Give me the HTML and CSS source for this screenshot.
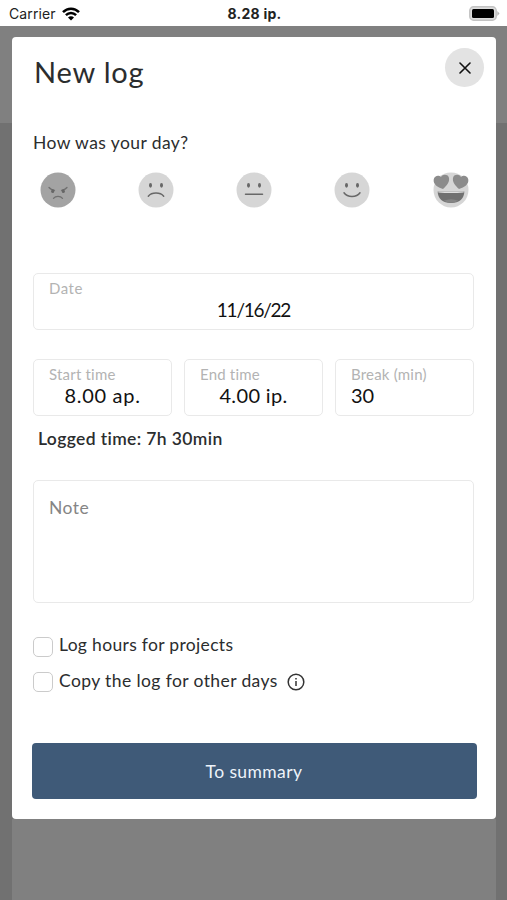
FILE: index.html
```html
<!DOCTYPE html>
<html lang="en">
<head>
<meta charset="utf-8">
<title>New log</title>
<link rel="stylesheet" href="styles.css">
</head>
<body>
<header class="status">
  <div class="carrier"><span class="carrier-name">Carrier</span>
    <svg width="18" height="14" viewBox="0 0 18 14" fill="none" stroke="#000" stroke-width="2.5"><path d="M1 5.1C5.5.5 12.500.5 17 5.100M3.900 8.100c2.900-2.900 7.300-2.900 10.200 0"/><path d="M9 13.500l-3-3.100c1.600-1.600 4.400-1.600 6 0z" fill="#000" stroke="none"/></svg>
  </div>
  <div class="clock"><span class="clock-text">8.28 ip.</span></div>
  <div class="battery"><svg width="31" height="15" viewBox="0 0 31 15"><rect x=".8" y=".8" width="26.400" height="13.400" rx="3.800" fill="#ddd" stroke="#c3c3c3" stroke-width="1.500"/><rect x="3" y="3" width="22" height="9" rx="1.500"/><path d="M28.300 5l2.200 2.500-2.200 2.500z" fill="#b5b5b5"/></svg></div>
</header>
<main class="backdrop">
  <section class="modal">
    <div class="heading">
      <h1><span class="title-text">New log</span></h1>
      <button class="close" aria-label="Close"><svg width="12" height="12" viewBox="0 0 12 12" stroke="#111" stroke-width="1.600" stroke-linecap="round"><path d="M1 1l10 10M11 1L1 11"/></svg></button>
    </div>
    <p class="question"><span class="question-text">How was your day?</span></p>
    <div class="moods">
      <svg viewBox="0 0 36 36"><circle cx="18" cy="18" r="17.500" fill="#a3a3a3"/><g fill="none" stroke="#707070" stroke-width="1.300" stroke-linecap="round"><path d="M9 15.500q2 2.500 5.500 2.800M27 15.500q-2 2.500-5.500 2.800M13.500 26.300c2-2.500 7-2.500 9 0"/></g><g fill="#666"><ellipse cx="12.700" cy="19.200" rx="1.500" ry="1.900"/><ellipse cx="23.300" cy="19.200" rx="1.500" ry="1.900"/></g></svg>
      <svg viewBox="0 0 36 36"><circle cx="18" cy="18" r="17.500" fill="#d6d6d6"/><g fill="#686868"><ellipse cx="12.500" cy="13.300" rx="1.500" ry="2.400"/><ellipse cx="23.500" cy="13.300" rx="1.500" ry="2.400"/></g><path d="M10.300 24.200c3.500-4.200 11.900-4.200 15.400 0" fill="none" stroke="#686868" stroke-width="1.500" stroke-linecap="round"/></svg>
      <svg viewBox="0 0 36 36"><circle cx="18" cy="18" r="17.500" fill="#d6d6d6"/><g fill="#686868"><ellipse cx="12.500" cy="13.300" rx="1.500" ry="2.400"/><ellipse cx="23.500" cy="13.300" rx="1.500" ry="2.400"/></g><path d="M9.500 22.300h17" stroke="#686868" stroke-width="1.500" stroke-linecap="round"/></svg>
      <svg viewBox="0 0 36 36"><circle cx="18" cy="18" r="17.500" fill="#d6d6d6"/><g fill="#686868"><ellipse cx="12.500" cy="13.300" rx="1.500" ry="2.400"/><ellipse cx="23.500" cy="13.300" rx="1.500" ry="2.400"/></g><path d="M10 20.800c3.500 5 12.500 5 16 0" fill="none" stroke="#686868" stroke-width="1.500" stroke-linecap="round"/></svg>
      <svg viewBox="0 0 36 36"><circle cx="18" cy="18" r="17.500" fill="#d6d6d6"/><path d="M4.700 19.500h26.600c0 7-5 11.500-13.300 11.500S4.700 26.500 4.700 19.500z" fill="#707070"/><path d="M5.300 19.500h25.400v1q-12.700 1-25.400 0z" fill="#dedede"/><path d="M10.500 28.800q7.500-3 15 0Q18 32.500 10.500 28.800z" fill="#858585"/><g fill="#8c8c8c"><path d="M10 17C4.500 15.500 0 12 .7 7.500 1.500 3.300 6 2.800 8 5 9.500 2.200 14.500 2 15.800 5.300 17.200 9.500 13.800 13.800 10 17z"/><path d="M26 17C31.500 15.500 36 12 35.300 7.500 34.500 3.300 30 2.800 28 5 26.500 2.200 21.500 2 20.200 5.300 18.800 9.500 22.200 13.800 26 17z"/></g></svg>
    </div>
    <div class="field date"><span class="label l-date">Date</span><span class="value"><span class="v-date">11/16/22</span></span></div>
    <div class="times">
      <div class="field"><span class="label l-start">Start time</span><span class="value"><span class="v-start">8.00 ap.</span></span></div>
      <div class="field"><span class="label l-end">End time</span><span class="value"><span class="v-end">4.00 ip.</span></span></div>
      <div class="field"><span class="label l-break">Break (min)</span><span class="value left"><span class="v-break">30</span></span></div>
    </div>
    <p class="logged"><span class="logged-text">Logged time: 7h 30min</span></p>
    <div class="note"><span class="note-text">Note</span></div>
    <div class="option"><i class="box"></i><span class="o-projects">Log hours for projects</span></div>
    <div class="option"><i class="box"></i><span class="o-copy">Copy the log for other days</span>
      <svg class="info" width="18" height="18" viewBox="0 0 18 18" fill="none" stroke="#333" stroke-width="1.500"><circle cx="9" cy="9" r="7.800"/><path d="M9 8v5M9 5v1.600"/></svg></div>
    <button class="summary"><span class="summary-text">To summary</span></button>
  </section>
  <div class="page"></div>
</main>
</body>
</html>
```
FILE: styles.css
```css
* { box-sizing: border-box; }
body { margin: 0; height: 900px; overflow: hidden; background: #fff; font-family: Lato, sans-serif; font-variant-ligatures: none; color: #2b2d2e; }
h1, p { margin: 0; font-weight: 400; }
button { border: 0; padding: 0; font: inherit; }
span { white-space: nowrap; }
.status { height: 26px; display: grid; grid-template-columns: 1fr 1fr 1fr; align-items: center; padding: 1px 7px 0 9px; font: 14px/24px Inter, sans-serif; color: #222; }
.carrier { display: flex; align-items: center; gap: 6px; letter-spacing: .1px; }
.clock { text-align: center; font-weight: 700; letter-spacing: .25px; }
.battery { display: flex; justify-content: flex-end; }
.backdrop { height: 874px; padding: 11px 11px 0 12px; background: linear-gradient(#808080 97px, #717171 97px); }
.modal { height: 782px; background: #fff; border-radius: 4px; padding: 11px 12px 0 21px; }
.heading { display: flex; justify-content: space-between; }
h1 { font-size: 29px; line-height: 36px; padding: 6px 0 0 1px; letter-spacing: .8px; }
.close { width: 39px; height: 39px; border-radius: 50%; background: #e3e3e3; display: flex; align-items: center; justify-content: center; }
.question { margin-top: 41px; font-size: 17.5px; line-height: 24px; letter-spacing: .42px; }
.moods { width: 429px; margin: 17px 0 0 6.500px; display: flex; justify-content: space-between; }
.moods svg { width: 36px; height: 36px; }
.field, .note { border: 1.500px solid #e9e9e9; border-radius: 5px; }
.field { height: 57px; padding: 3px 15px 0; }
.field span { display: block; }
.date { width: 441px; margin-top: 65px; }
.label { font-size: 15px; line-height: 22px; color: #b3b3b3; width: max-content; }
.l-date { letter-spacing: .5px; }
.l-start, .l-end, .l-break { letter-spacing: .2px; }
.value { margin-top: -1px; font-size: 20px; line-height: 22px; color: #111; text-align: center; }
.value span { display: inline-block; }
.value .v-date { font-size: 19px; letter-spacing: -1.250px; }
.v-start { letter-spacing: .7px; }
.v-end { letter-spacing: .35px; }
.value.left { text-align: left; }
.times { width: 441px; margin-top: 29px; display: grid; grid-template-columns: repeat(3, 1fr); gap: 12px; }
.logged { margin-top: 11px; padding-left: 5px; font-size: 17.500px; line-height: 24px; font-weight: 600; letter-spacing: .37px; }
.note { width: 441px; margin: 29px 0 30px; height: 123px; padding: 15px; font-size: 17.500px; line-height: 24px; letter-spacing: .5px; color: #858585; }
.option { height: 35.500px; display: flex; align-items: flex-start; font-size: 17.500px; line-height: 24px; letter-spacing: .4px; }
.o-projects { letter-spacing: .32px; }
.box { width: 20px; height: 20px; margin: 3.500px 6px 0 0; border: 1.500px solid #cbcbcb; border-radius: 5px; }
.info { margin: 4.500px 0 0 9px; }
.summary { display: block; width: 445px; height: 56px; margin: 39.400px 0 0 -1.500px; border-radius: 4px; background: #3f5a78; color: #edf3fa; font-size: 17.500px; letter-spacing: .4px; }
.page { height: 81px; background: #808080; }
```
